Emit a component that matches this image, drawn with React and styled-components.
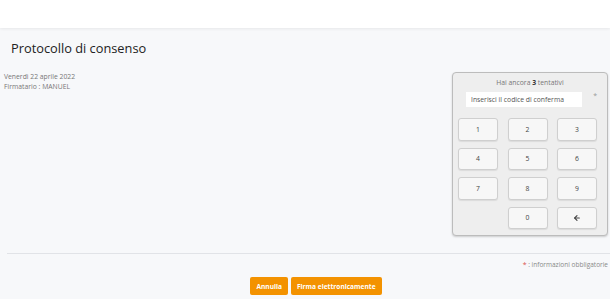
import React from 'react'
import styled, { createGlobalStyle } from 'styled-components'
import { ArrowLeft } from 'lucide-react'

const GlobalStyle = createGlobalStyle`
    html, body {
        margin: 0;
        padding: 0;
        background-color: #f7f8fa;
        font-family: "Open Sans", "Noto Sans", sans-serif;
        color: #333;
    }
`

const keys = ['1', '2', '3', '4', '5', '6', '7', '8', '9', '', '0', 'back']

const App = () => {
    return (
        <Page>
            <GlobalStyle />
            <Header />
            <Title>Protocollo di consenso</Title>

            <Content>
                <Info>
                    <div>Venerdì 22 aprile 2022</div>
                    <div>Firmatario : MANUEL</div>
                </Info>

                <Keypad>
                    <Attempts>
                        Hai ancora <b>3</b> tentativi
                    </Attempts>
                    <InputRow>
                        <CodeInput placeholder='Inserisci il codice di conferma' />
                        <Star $muted>*</Star>
                    </InputRow>
                    <Keys>
                        {keys.map((k, i) =>
                            k === '' ? (
                                <span key={i} />
                            ) : (
                                <Key key={i}>
                                    {k === 'back' ? <ArrowLeft size={8} strokeWidth={3.4} /> : k}
                                </Key>
                            )
                        )}
                    </Keys>
                </Keypad>
            </Content>

            <Divider />
            <Legend>
                <Star>*</Star> : informazioni obbligatorie
            </Legend>

            <Actions>
                <Button>Annulla</Button>
                <Button>Firma elettronicamente</Button>
            </Actions>
        </Page>
    )
}

export default App

const Page = styled.div`
    width: 610px;
    height: 299px;
    overflow: hidden;
`

const Header = styled.header`
    height: 28px;
    background-color: #fff;
    box-shadow: 0 1px 3px rgba(0, 0, 0, 0.07);
`

const Title = styled.h1`
    margin: 10px 0 0 11px;
    font-size: 12.8px;
    line-height: 20px;
    font-weight: 400;
    color: #222;
`

const Content = styled.div`
    display: flex;
    justify-content: space-between;
    align-items: flex-start;
    margin-top: 14px;
    padding: 0 2px 0 4px;
`

const Info = styled.div`
    font-size: 6.8px;
    line-height: 9.5px;
    color: #777;
`

const Keypad = styled.div`
    width: 139px;
    padding: 4px 10px 6px 5px;
    background-color: #eeeeee;
    border: 1px solid #bcbcbc;
    border-radius: 4px;
    box-shadow: 0 1px 2px rgba(0, 0, 0, 0.18);
`

const Attempts = styled.div`
    text-align: center;
    font-size: 6.8px;
    line-height: 11px;
    color: #777;
    padding-left: 5px;

    b {
        color: #333;
    }
`

const InputRow = styled.div`
    display: flex;
    align-items: flex-start;
    margin-top: 4px;
    padding-left: 8px;
`

const CodeInput = styled.input`
    width: 120px;
    height: 15px;
    box-sizing: border-box;
    border: none;
    padding: 0 5px;
    background: #fff;
    font-family: inherit;
    font-size: 6.8px;
    color: #333;
    outline: none;

    &::placeholder {
        color: #555;
    }
`

const Star = styled.span`
    color: ${({ $muted }) => ($muted ? '#999' : '#d9534f')};
    font-size: 7px;
    margin-left: ${({ $muted }) => ($muted ? '11px' : '0')};
    line-height: 7px;
`

const Keys = styled.div`
    display: grid;
    grid-template-columns: repeat(3, 40px);
    grid-auto-rows: 22.5px;
    column-gap: 9.5px;
    row-gap: 7px;
    margin-top: 11px;
`

const Key = styled.button`
    display: flex;
    align-items: center;
    justify-content: center;
    padding: 0;
    background-color: #f7f7f7;
    border: 1px solid #cfcfcf;
    border-radius: 3px;
    box-shadow: 0 1px 1px rgba(0, 0, 0, 0.08);
    font-family: inherit;
    font-size: 6.8px;
    color: #444;
`

const Divider = styled.hr`
    margin: 17px 0 0 7px;
    border: none;
    border-top: 1px solid #e1e3e7;
`

const Legend = styled.div`
    margin-top: 6px;
    padding-right: 2px;
    text-align: right;
    font-size: 6.5px;
    line-height: 10px;
    color: #888;
`

const Actions = styled.div`
    display: flex;
    justify-content: center;
    gap: 3px;
    margin-top: 7px;
    padding-left: 22px;
`

const Button = styled.button`
    height: 18px;
    padding: 0 6px;
    background-color: #f39200;
    border: none;
    border-radius: 2px;
    color: #fff;
    font-family: inherit;
    font-weight: 700;
    font-size: 6.6px;
`
